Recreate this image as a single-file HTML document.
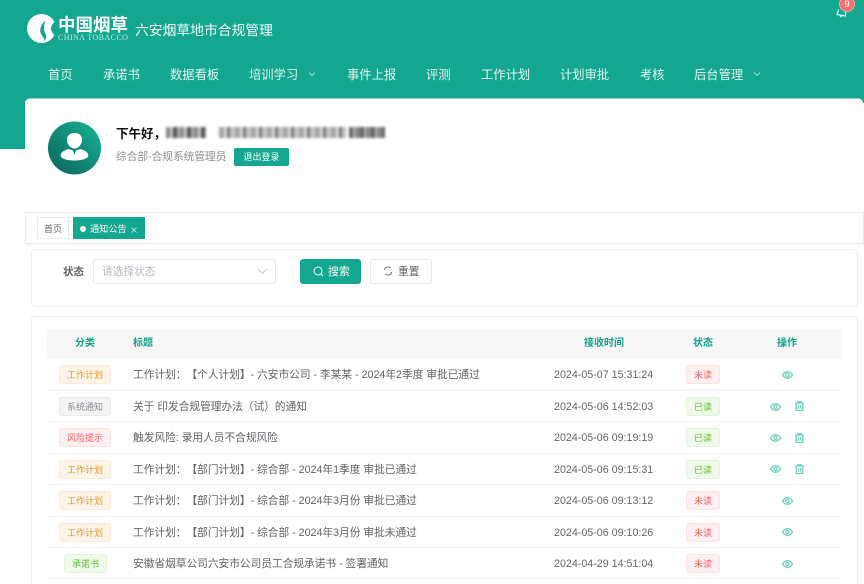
<!DOCTYPE html>
<html lang="zh-CN">
<head>
<meta charset="utf-8">
<title>六安烟草地市合规管理</title>
<style>
*{box-sizing:border-box;margin:0;padding:0}
html,body{width:864px;height:584px;overflow:hidden;background:#fff}
body{position:relative;font-family:"Liberation Sans","Noto Sans CJK SC",sans-serif;color:#606266;text-spacing-trim:space-all;font-feature-settings:"chws" 0,"halt" 0,"palt" 0}
.a{position:absolute;white-space:nowrap}
.soft{filter:blur(.35px)}
.nav{top:66px;height:18px;line-height:18px;font-size:12.3px;color:#e4f5f1}
.tag{position:absolute;height:19px;line-height:18px;border:1px solid;border-radius:3px;font-size:9px;text-align:center}
.orange{left:59px;width:52px;background:#fdf4e9;border-color:#faecd8;color:#e39a2e}
.gray{left:59px;width:52px;background:#f4f4f5;border-color:#e9e9eb;color:#888b91}
.red{left:59px;width:52px;background:#fef0f0;border-color:#fde2e2;color:#f25f5f}
.green{left:64px;width:43px;background:#f0f9eb;border-color:#e1f3d8;color:#5fbd31}
.sred,.sgreen{left:686px;width:34px}
.sred{background:#fef0f0;border-color:#fde2e2;color:#f25f5f}
.sgreen{background:#f0f9eb;border-color:#e1f3d8;color:#5fbd31}
.title{position:absolute;left:133px;height:16px;line-height:18px;font-size:10.7px;color:#606266;white-space:nowrap}
.time{position:absolute;left:554px;height:16px;line-height:18px;font-size:10.7px;color:#666;white-space:nowrap}
.line{position:absolute;left:47px;width:795px;height:1px;background:#f0f1f6}
.th{position:absolute;top:337px;height:14px;line-height:14px;font-size:10px;font-weight:bold;color:#14a088;white-space:nowrap}
svg{position:absolute;overflow:visible}
.ico{fill:none;stroke:#74cfbe;stroke-width:1.300}
</style>
</head>
<body>
<!-- header -->
<div class="a" style="left:0;top:0;width:864px;height:103px;background:#12a78e"></div>
<div class="a" style="left:0;top:98px;width:25px;height:51px;background:#12a78e"></div>

<svg style="left:26px;top:13px" width="30" height="31" viewBox="0 0 30 31">
  <circle cx="15.500" cy="15.500" r="14.500" fill="#fff"/>
  <path d="M31 8C27.500 9 25 12 25 15.500C25 19 27.500 22 31 23Z" fill="#12a78e"/>
  <path d="M19.500 7.500C14.500 11.500 12.500 18 16 22.500C17.800 25 18.800 26.500 18.300 28C21 25.500 20.700 22.800 19 20C17.300 16.500 18 11 19.500 7.500Z" fill="#12a78e"/>
</svg>
<div class="a" style="left:58px;top:14px;font-size:17.500px;line-height:22px;font-weight:bold;color:#fff">中国烟草</div>
<div class="a" style="left:58px;top:33px;font-family:'Liberation Serif',serif;font-size:8px;line-height:9px;color:#bfe8df;letter-spacing:.42px">CHINA TOBACCO</div>
<div class="a soft" style="left:135px;top:21px;font-size:13.800px;line-height:19px;color:#f3fbf9">六安烟草地市合规管理</div>

<div class="a nav soft" style="left:48px">首页</div>
<div class="a nav soft" style="left:103px">承诺书</div>
<div class="a nav soft" style="left:170px">数据看板</div>
<div class="a nav soft" style="left:249px">培训学习</div>
<svg style="left:308px;top:71px" width="8" height="6"><path d="M1 1.500L4 4.500L7 1.500" fill="none" stroke="#a9e0d5" stroke-width=".9"/></svg>
<div class="a nav soft" style="left:347px">事件上报</div>
<div class="a nav soft" style="left:426px">评测</div>
<div class="a nav soft" style="left:481px">工作计划</div>
<div class="a nav soft" style="left:560px">计划审批</div>
<div class="a nav soft" style="left:640px">考核</div>
<div class="a nav soft" style="left:694px">后台管理</div>
<svg style="left:753px;top:71px" width="8" height="6"><path d="M1 1.500L4 4.500L7 1.500" fill="none" stroke="#a9e0d5" stroke-width=".9"/></svg>

<!-- bell -->
<svg style="left:836px;top:4px" width="14" height="13" viewBox="0 0 14 13">
  <path d="M2.500 5.500C2 8 1.500 9.500 1 10.500L9.500 12C9.500 10 9.500 8 10 5.500" fill="none" stroke="#d5f1eb" stroke-width="1.300"/>
  <circle cx="5" cy="12" r="1.300" fill="#d5f1eb"/>
</svg>
<div class="a" style="left:839px;top:-4px;width:16px;height:16px;border-radius:8px;background:#f56c6c;border:1px solid #f7a5a5;color:#fff;font-size:9.500px;line-height:15px;text-align:center">9</div>

<!-- profile card -->
<div class="a" style="left:25px;top:98px;width:838px;height:110px;background:#fff;border-radius:5px 5px 0 0;border-top:1px solid #8fd8ca"></div>
<svg style="left:48px;top:121px" width="53" height="54" viewBox="0 0 53 54">
  <defs><linearGradient id="g" x1="0.850" y1="0.150" x2="0.150" y2="0.850"><stop offset="0" stop-color="#17a88e"/><stop offset="1" stop-color="#0b6f60"/></linearGradient></defs>
  <circle cx="26.500" cy="27" r="26.500" fill="url(#g)"/>
  <path d="M26.500 12C21.500 12 19 15 19 18.500C19 23.500 22.500 27.500 26.500 27.500C30.500 27.500 34 23.500 34 18.500C34 15 31.500 12 26.500 12Z" fill="#fff"/>
  <path d="M20.500 28C15.500 29.500 12.700 31.500 12.700 34.500C12.700 37.500 18.500 39.500 26.500 39.500C34.500 39.500 40.300 37.500 40.300 34.500C40.300 31.500 37.500 29.500 32.500 28L28 29.500L26.500 34L25 29.500Z" fill="#fff"/>
</svg>
<div class="a" style="left:116px;top:125px;font-size:12.500px;line-height:18px;font-weight:bold;color:#111">下午好，</div>
<div class="a" style="left:166px;top:127px;width:40px;height:11px;filter:blur(1.300px);background:repeating-linear-gradient(90deg,#8a8a8a 0 4px,#c9c9c9 4px 7px,#555 7px 11px,#aaa 11px 14px)"></div>
<div class="a" style="left:219px;top:127px;width:127px;height:11px;filter:blur(1.300px);background:repeating-linear-gradient(90deg,#a5a5a5 0 5px,#d8d8d8 5px 8px,#777 8px 11px,#c2c2c2 11px 16px)"></div>
<div class="a" style="left:349px;top:127px;width:36px;height:11px;filter:blur(1.300px);background:repeating-linear-gradient(90deg,#666 0 4px,#b8b8b8 4px 6px,#888 6px 11px)"></div>
<div class="a soft" style="left:116px;top:149px;font-size:10.700px;line-height:16px;color:#8e8e8e">综合部-合规系统管理员</div>
<div class="a soft" style="left:234px;top:148px;width:55px;height:18px;background:#12a78e;border-radius:2px;color:#fff;font-size:9px;line-height:19px;text-align:center">退出登录</div>

<!-- tabs -->
<div class="a" style="left:25px;top:212px;width:839px;height:32px;background:#fff;border:1px solid #e9ebf1;box-shadow:0 1px 2px rgba(0,0,0,.05)"></div>
<div class="a soft" style="left:37px;top:217px;width:32px;height:22px;border:1px solid #e8eaf0;background:#fff;color:#666;font-size:9px;line-height:22px;text-align:center">首页</div>
<div class="a" style="left:73px;top:217px;width:72px;height:22px;background:#12a78e"></div>
<div class="a" style="left:80px;top:226px;width:6px;height:6px;border-radius:50%;background:#fff"></div>
<div class="a soft" style="left:90px;top:217px;font-size:9.200px;line-height:24px;color:#fff">通知公告</div>
<svg style="left:131px;top:227px" width="6" height="6"><path d="M.5 .5L5.500 5.500M5.500 .5L.5 5.500" stroke="#cfeee8" stroke-width=".8"/></svg>

<!-- search card -->
<div class="a" style="left:31px;top:249px;width:827px;height:58px;border:1px solid #ebeef5;border-radius:4px;border-top-color:#f0f2f6"></div>
<div class="a soft" style="left:63px;top:264px;font-size:10.500px;line-height:16px;font-weight:bold;color:#606266">状态</div>
<div class="a" style="left:93px;top:259px;width:183px;height:25px;border:1px solid #e4e7ed;border-radius:3px;background:#fff"></div>
<div class="a soft" style="left:102px;top:264px;font-size:10.700px;line-height:16px;color:#b5b8c0">请选择状态</div>
<svg style="left:257px;top:268px" width="11" height="7"><path d="M1 1L5.500 5.500L10 1" fill="none" stroke="#bfc3ca" stroke-width=".9"/></svg>
<div class="a" style="left:300px;top:259px;width:61px;height:25px;border-radius:3px;background:#12a78e"></div>
<svg style="left:313px;top:266px" width="11" height="11" viewBox="0 0 11 11"><circle cx="5" cy="5" r="4" fill="none" stroke="#fff" stroke-width=".9"/><path d="M8 8L10 10" stroke="#fff" stroke-width=".9"/></svg>
<div class="a soft" style="left:328px;top:264px;font-size:10.900px;line-height:16px;color:#fff">搜索</div>
<div class="a" style="left:370px;top:259px;width:62px;height:25px;border-radius:3px;border:1px solid #e4e7ed;background:#fff"></div>
<svg style="left:383px;top:266px" width="10" height="10" viewBox="0 0 10 10"><path d="M1.200 4A4 4 0 0 1 8 2.200M8.800 6A4 4 0 0 1 2 7.800" fill="none" stroke="#666" stroke-width=".9"/></svg>
<div class="a soft" style="left:398px;top:264px;font-size:10.700px;line-height:16px;color:#606266">重置</div>

<!-- table card -->
<div class="a" style="left:31px;top:316px;width:827px;height:280px;border:1px solid #ebeef5;border-radius:4px"></div>
<div class="a" style="left:47px;top:329px;width:795px;height:30px;background:#f8f8f9"></div>
<div class="th soft" style="left:75px">分类</div>
<div class="th soft" style="left:133px">标题</div>
<div class="th soft" style="left:584px">接收时间</div>
<div class="th soft" style="left:693px">状态</div>
<div class="th soft" style="left:777px">操作</div>

<div class="line" style="top:390px"></div>
<div class="line" style="top:421px"></div>
<div class="line" style="top:453px"></div>
<div class="line" style="top:484px"></div>
<div class="line" style="top:516px"></div>
<div class="line" style="top:547px"></div>
<div class="line" style="top:578px"></div>

<!-- rows -->
<div class="tag orange soft" style="top:365px">工作计划</div>
<div class="title soft" style="top:366px">工作计划：【个人计划】- 六安市公司 - 李某某 - 2024年2季度 审批已通过</div>
<div class="time soft" style="top:366px">2024-05-07 15:31:24</div>
<div class="tag sred soft" style="top:365px">未读</div>

<div class="tag gray soft" style="top:397px">系统通知</div>
<div class="title soft" style="top:398px">关于 印发合规管理办法（试）的通知</div>
<div class="time soft" style="top:398px">2024-05-06 14:52:03</div>
<div class="tag sgreen soft" style="top:397px">已读</div>

<div class="tag red soft" style="top:428px">风险提示</div>
<div class="title soft" style="top:429px">触发风险: 录用人员不合规风险</div>
<div class="time soft" style="top:429px">2024-05-06 09:19:19</div>
<div class="tag sgreen soft" style="top:428px">已读</div>

<div class="tag orange soft" style="top:460px">工作计划</div>
<div class="title soft" style="top:461px">工作计划：【部门计划】- 综合部 - 2024年1季度 审批已通过</div>
<div class="time soft" style="top:461px">2024-05-06 09:15:31</div>
<div class="tag sgreen soft" style="top:460px">已读</div>

<div class="tag orange soft" style="top:491px">工作计划</div>
<div class="title soft" style="top:492px">工作计划：【部门计划】- 综合部 - 2024年3月份 审批已通过</div>
<div class="time soft" style="top:492px">2024-05-06 09:13:12</div>
<div class="tag sred soft" style="top:491px">未读</div>

<div class="tag orange soft" style="top:523px">工作计划</div>
<div class="title soft" style="top:524px">工作计划：【部门计划】- 综合部 - 2024年3月份 审批未通过</div>
<div class="time soft" style="top:524px">2024-05-06 09:10:26</div>
<div class="tag sred soft" style="top:523px">未读</div>

<div class="tag green soft" style="top:554px">承诺书</div>
<div class="title soft" style="top:555px">安徽省烟草公司六安市公司员工合规承诺书 - 签署通知</div>
<div class="time soft" style="top:555px">2024-04-29 14:51:04</div>
<div class="tag sred soft" style="top:554px">未读</div>

<!-- eye icons -->
<svg class="ico" style="left:782px;top:371px" width="11" height="8" viewBox="0 0 11 8"><path d="M.5 4C2 1.500 3.700 .7 5.500 .7S9 1.500 10.500 4C9 6.500 7.300 7.300 5.500 7.300S2 6.500 .5 4z"/><circle cx="5.500" cy="4" r="1.600"/></svg>
<svg class="ico" style="left:770px;top:403px" width="11" height="8" viewBox="0 0 11 8"><path d="M.5 4C2 1.500 3.700 .7 5.500 .7S9 1.500 10.500 4C9 6.500 7.300 7.300 5.500 7.300S2 6.500 .5 4z"/><circle cx="5.500" cy="4" r="1.600"/></svg>
<svg class="ico" style="left:770px;top:434px" width="11" height="8" viewBox="0 0 11 8"><path d="M.5 4C2 1.500 3.700 .7 5.500 .7S9 1.500 10.500 4C9 6.500 7.300 7.300 5.500 7.300S2 6.500 .5 4z"/><circle cx="5.500" cy="4" r="1.600"/></svg>
<svg class="ico" style="left:770px;top:465px" width="11" height="8" viewBox="0 0 11 8"><path d="M.5 4C2 1.500 3.700 .7 5.500 .7S9 1.500 10.500 4C9 6.500 7.300 7.300 5.500 7.300S2 6.500 .5 4z"/><circle cx="5.500" cy="4" r="1.600"/></svg>
<svg class="ico" style="left:782px;top:497px" width="11" height="8" viewBox="0 0 11 8"><path d="M.5 4C2 1.500 3.700 .7 5.500 .7S9 1.500 10.500 4C9 6.500 7.300 7.300 5.500 7.300S2 6.500 .5 4z"/><circle cx="5.500" cy="4" r="1.600"/></svg>
<svg class="ico" style="left:782px;top:528px" width="11" height="8" viewBox="0 0 11 8"><path d="M.5 4C2 1.500 3.700 .7 5.500 .7S9 1.500 10.500 4C9 6.500 7.300 7.300 5.500 7.300S2 6.500 .5 4z"/><circle cx="5.500" cy="4" r="1.600"/></svg>
<svg class="ico" style="left:782px;top:560px" width="11" height="8" viewBox="0 0 11 8"><path d="M.5 4C2 1.500 3.700 .7 5.500 .7S9 1.500 10.500 4C9 6.500 7.300 7.300 5.500 7.300S2 6.500 .5 4z"/><circle cx="5.500" cy="4" r="1.600"/></svg>

<!-- trash icons -->
<svg class="ico" style="left:795px;top:401px" width="9" height="10" viewBox="0 0 9 10"><path d="M0 2H9M3 2V.6H6V2M1.200 2V9.500H7.800V2M3.300 4V7.800M5.700 4V7.800"/></svg>
<svg class="ico" style="left:795px;top:433px" width="9" height="10" viewBox="0 0 9 10"><path d="M0 2H9M3 2V.6H6V2M1.200 2V9.500H7.800V2M3.300 4V7.800M5.700 4V7.800"/></svg>
<svg class="ico" style="left:795px;top:464px" width="9" height="10" viewBox="0 0 9 10"><path d="M0 2H9M3 2V.6H6V2M1.200 2V9.500H7.800V2M3.300 4V7.800M5.700 4V7.800"/></svg>
</body>
</html>
